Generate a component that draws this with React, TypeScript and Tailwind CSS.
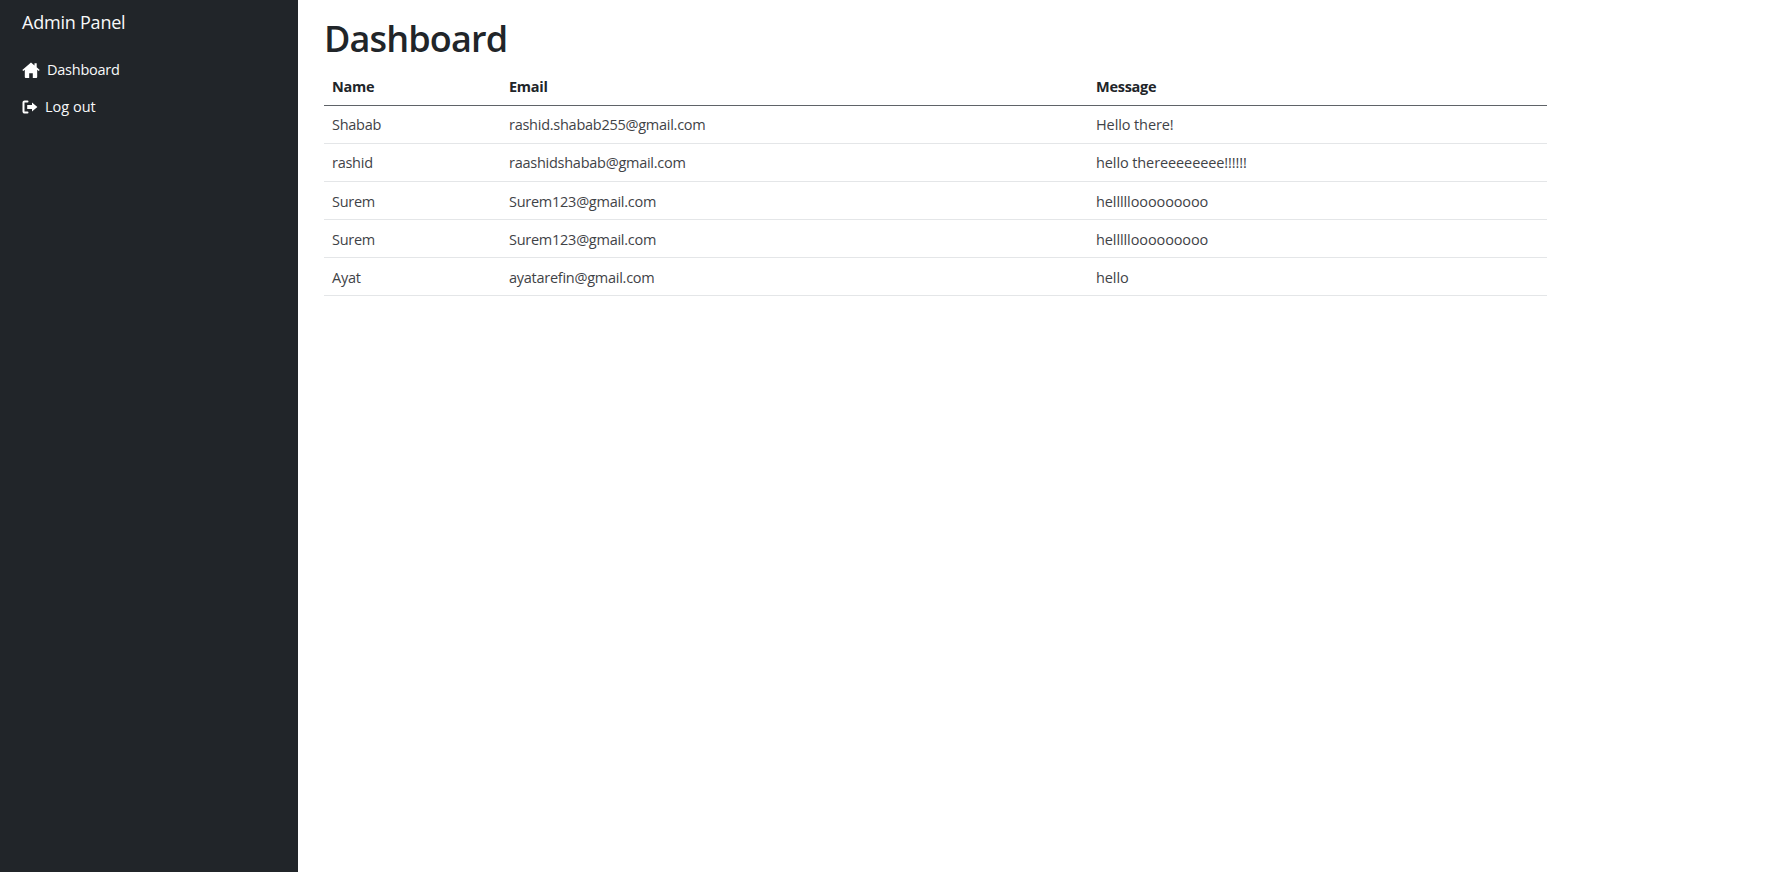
const rows = [
  ["Shabab", "rashid.shabab255@gmail.com", "Hello there!"],
  ["rashid", "raashidshabab@gmail.com", "hello thereeeeeeee!!!!!!"],
  ["Surem", "Surem123@gmail.com", "helllllooooooooo"],
  ["Surem", "Surem123@gmail.com", "helllllooooooooo"],
  ["Ayat", "ayatarefin@gmail.com", "hello"],
];

function HomeIcon() {
  return (
    <svg viewBox="0 0 18 16" className="h-[16px] w-[18px] text-white" fill="currentColor">
      <path d="M9 .4 .3 7.9l1 1.2 1.5-1.3V15a.9.9 0 0 0 .9.9h3.5v-4.6h3.6v4.6h3.5a.9.9 0 0 0 .9-.9V7.8l1.5 1.3 1-1.2-3-2.6V1.2h-2.2v2.2z" />
    </svg>
  );
}

function LogoutIcon() {
  return (
    <svg viewBox="0 0 16 14" className="h-[14px] w-[16px] text-white" fill="currentColor">
      <path d="M5.5 1.5H2.6A1.1 1.1 0 0 0 1.5 2.6v8.8a1.1 1.1 0 0 0 1.1 1.1h2.9" fill="none" stroke="currentColor" strokeWidth="2" strokeLinecap="round" />
      <path d="M10 2.4 15.4 7 10 11.6V9H5.2V5H10z" />
    </svg>
  );
}

export default function App() {
  return (
    <div className="flex h-[872px] w-[1788px] overflow-hidden bg-white font-['Open_Sans','Noto_Sans',sans-serif] text-[#212529]">
      <aside className="flex w-[298px] shrink-0 flex-col bg-[#212529] pl-[22px] text-[#f8f9fa]">
        <div className="mt-[9px] text-[18px] leading-[27px] tracking-[-0.22px]">Admin Panel</div>
        <nav className="mt-[22px] flex flex-col gap-[14px] text-[14.5px] leading-[23px] tracking-[-0.25px]">
          <a className="flex items-center gap-[7px]">
            <HomeIcon />
            <span>Dashboard</span>
          </a>
          <a className="flex items-center gap-[7px]">
            <LogoutIcon />
            <span className="tracking-[0px]">Log out</span>
          </a>
        </nav>
      </aside>
      <main className="flex-1 pl-[26px]">
        <h1 className="mt-[15px] text-[36px] font-semibold leading-[48px] tracking-[-0.85px]">Dashboard</h1>
        <table className="mt-[4px] w-[1223px] table-fixed border-collapse text-[14.5px] tracking-[-0.26px]">
          <colgroup>
            <col className="w-[177px]" />
            <col className="w-[587px]" />
            <col />
          </colgroup>
          <thead>
            <tr className="h-[38px] border-b border-[#5f6368] text-left">
              <th className="px-2 pt-[2px] font-bold">Name</th>
              <th className="px-2 pt-[2px] font-bold">Email</th>
              <th className="px-2 pt-[2px] font-bold">Message</th>
            </tr>
          </thead>
          <tbody className="text-[#3f4347]">
            {rows.map((r, i) => (
              <tr key={i} className="h-[38.2px] border-b border-[#e4e6e8]">
                <td className="px-2 pt-[2px]">{r[0]}</td>
                <td className="px-2 pt-[2px]">{r[1]}</td>
                <td className="px-2 pt-[2px] tracking-[-0.1px]">{r[2]}</td>
              </tr>
            ))}
          </tbody>
        </table>
      </main>
    </div>
  );
}
